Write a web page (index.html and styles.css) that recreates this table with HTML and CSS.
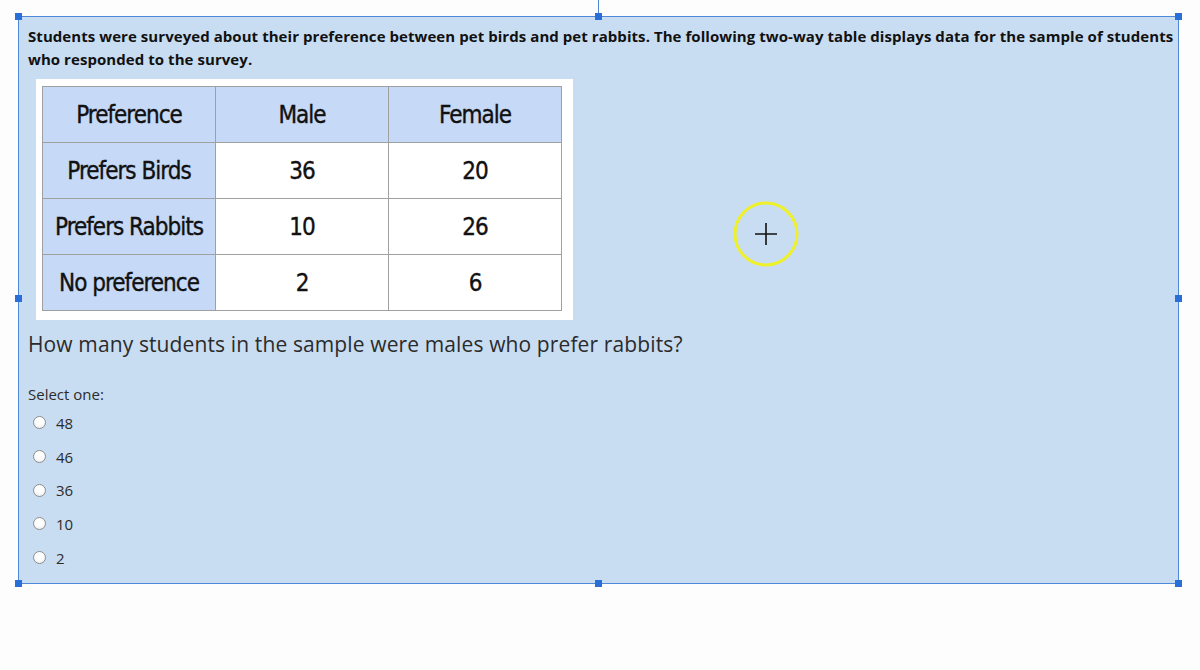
FILE: index.html
```html
<!DOCTYPE html>
<html>
<head>
<meta charset="utf-8">
<link rel="stylesheet" href="styles.css">
</head>
<body>
<div class="stage">
  <div class="frame">
    <p class="intro">Students were surveyed about their preference between pet birds and pet rabbits. The following two-way table displays data for the sample of students who responded to the survey.</p>
    <div class="table-card">
      <table class="two-way">
        <tr><th>Preference</th><th>Male</th><th>Female</th></tr>
        <tr><th>Prefers Birds</th><td>36</td><td>20</td></tr>
        <tr><th>Prefers Rabbits</th><td>10</td><td>26</td></tr>
        <tr><th>No preference</th><td>2</td><td>6</td></tr>
      </table>
    </div>
    <p class="question">How many students in the sample were males who prefer rabbits?</p>
    <p class="select">Select one:</p>
    <ul class="options">
      <li><span class="radio"></span>48</li>
      <li><span class="radio"></span>46</li>
      <li><span class="radio"></span>36</li>
      <li><span class="radio"></span>10</li>
      <li><span class="radio"></span>2</li>
    </ul>

    <span class="rot-line"></span>
    <span class="handle h-tl"></span>
    <span class="handle h-tc"></span>
    <span class="handle h-tr"></span>
    <span class="handle h-ml"></span>
    <span class="handle h-mr"></span>
    <span class="handle h-bl"></span>
    <span class="handle h-bc"></span>
    <span class="handle h-br"></span>

    <svg class="cursor" width="72" height="72" viewBox="0 0 72 72">
      <circle cx="36" cy="36" r="31" fill="none" stroke="#eef02a" stroke-width="3"/>
      <path d="M25 36H47M36 25V47" stroke="#111" stroke-width="1.6" fill="none"/>
    </svg>
  </div>
</div>
</body>
</html>
```
FILE: styles.css
```css
html, body {
  margin: 0;
  padding: 0;
  background: #fdfdfd;
}
.stage {
  padding: 16px 0 0 18px;
  height: 654px;
}
.frame {
  position: relative;
  box-sizing: border-box;
  width: 1161px;
  height: 568px;
  border: 1px solid #4f88d6;
  background: #c9ddf2;
  padding: 8px 0 0 9px;
  font-family: "Open Sans", "Liberation Sans", sans-serif;
}
.intro {
  margin: 0;
  width: 1150px;
  font-size: 15px;
  font-weight: 700;
  line-height: 23px;
  color: #111;
  letter-spacing: 0.06px;
}
.table-card {
  display: inline-block;
  margin: 8px 0 0 8px;
  padding: 7px 11px 9px 6px;
  background: #ffffff;
}
.two-way {
  border-collapse: collapse;
  table-layout: fixed;
  width: 520px;
  font-family: "DejaVu Sans", sans-serif;
  font-stretch: condensed;
  font-size: 24px;
  letter-spacing: -1px;
  color: #111;
  -webkit-text-stroke: 0.35px #111;
  white-space: nowrap;
}
.two-way th, .two-way td {
  width: 172px;
  height: 55px;
  padding: 0;
  border: 1px solid #a0a0a0;
  text-align: center;
  font-weight: 400;
}
.two-way th {
  background: #c6d9f6;
}
.two-way td {
  background: #ffffff;
}
.question {
  margin: 4px 0 0 0;
  font-size: 21px;
  line-height: 30px;
  color: #2b2b2b;
  letter-spacing: 0.12px;
}
.select {
  margin: 25px 0 0 0;
  font-size: 15px;
  line-height: 20px;
  color: #2b2b2b;
}
.options {
  list-style: none;
  margin: 2px 0 0 0;
  padding: 0;
}
.options li {
  display: flex;
  align-items: center;
  height: 33.7px;
  font-size: 15px;
  color: #2b2b2b;
}
.radio {
  box-sizing: border-box;
  width: 13px;
  height: 13px;
  margin: 0 10px 0 5px;
  border-radius: 50%;
  border: 1px solid #8f8f8f;
  background: radial-gradient(circle at 50% 35%, #ffffff 40%, #e6e6e6 100%);
}
.handle {
  position: absolute;
  width: 7px;
  height: 7px;
  background: #2a6fd8;
}
.h-tl { left: -4px; top: -4px; }
.h-tc { left: 576px; top: -4px; }
.h-tr { right: -4px; top: -4px; }
.h-ml { left: -4px; top: 278px; }
.h-mr { right: -4px; top: 278px; }
.h-bl { left: -4px; bottom: -4px; }
.h-bc { left: 576px; bottom: -4px; }
.h-br { right: -4px; bottom: -4px; }
.rot-line {
  position: absolute;
  left: 579px;
  top: -17px;
  width: 1px;
  height: 16px;
  background: #4f88d6;
}
.cursor {
  position: absolute;
  left: 711px;
  top: 181px;
}
```
